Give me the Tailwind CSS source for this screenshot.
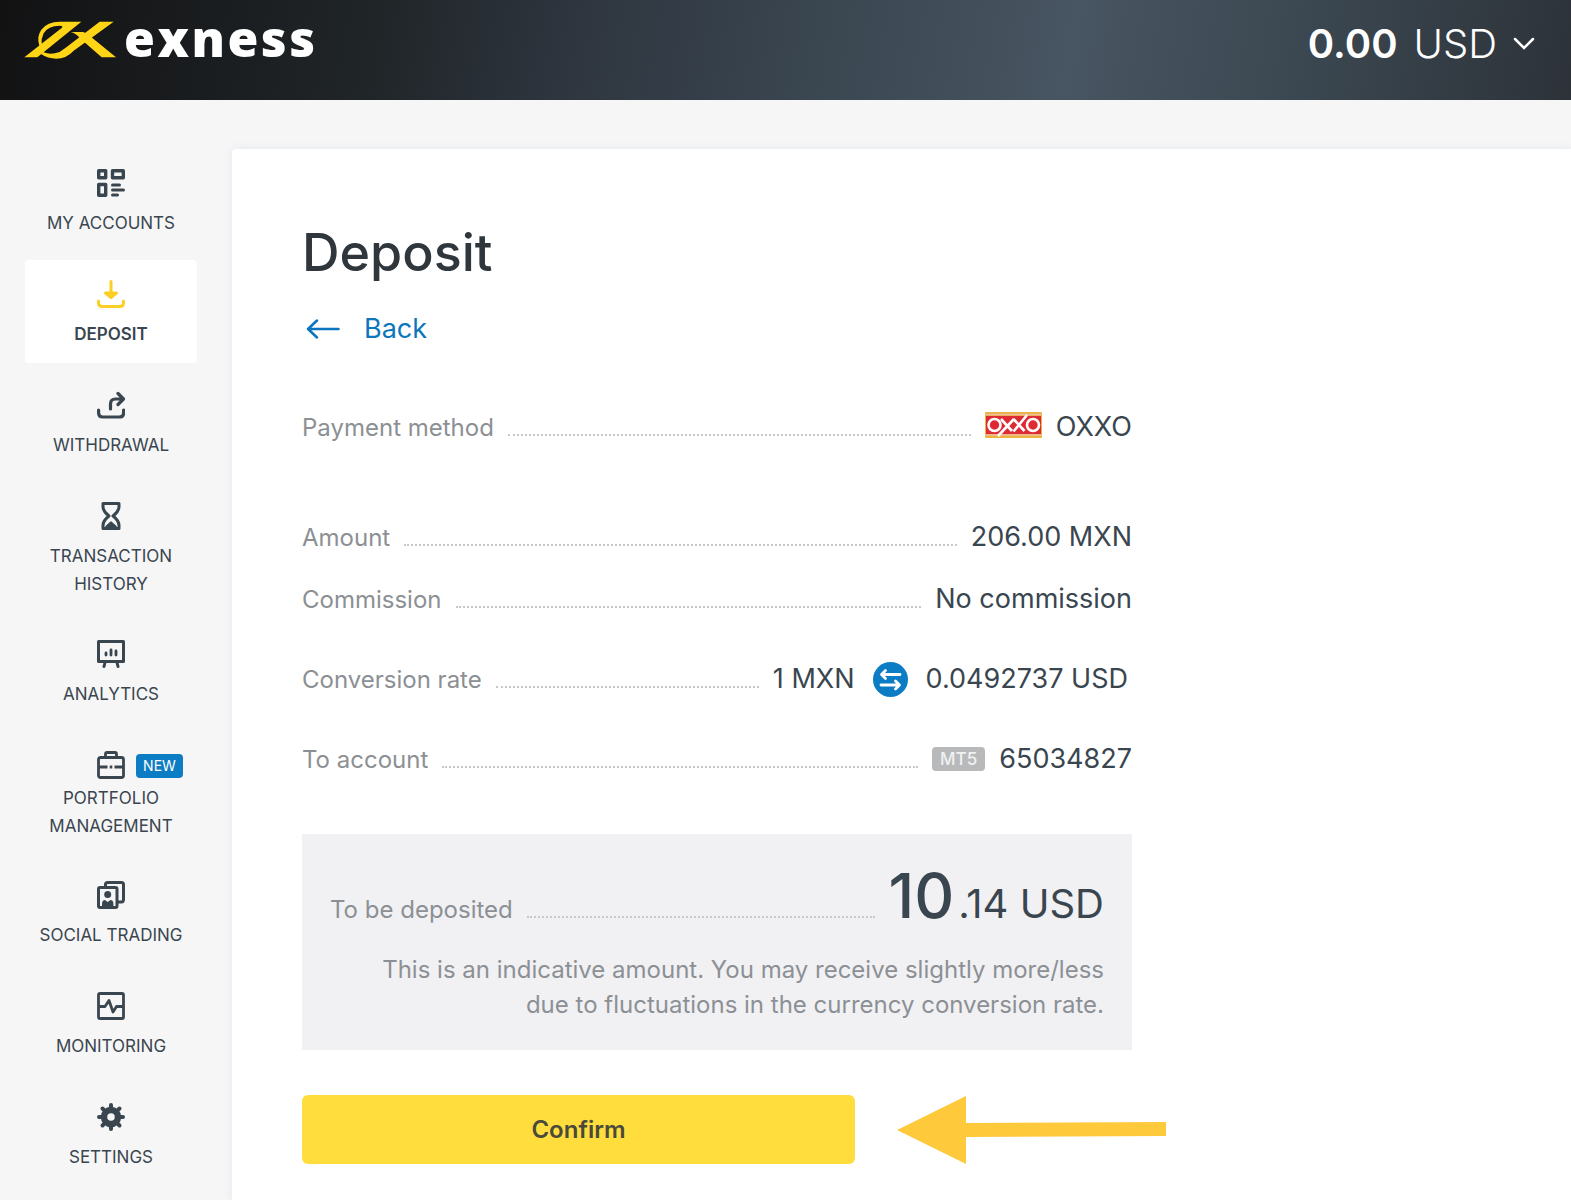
<!DOCTYPE html>
<html lang="en">

<head>
    <meta charset="UTF-8">
    <meta name="viewport" content="width=device-width, initial-scale=1.0">
    <title>Exness - Deposit</title>
    <script src="https://cdn.jsdelivr.net/npm/@tailwindcss/browser@4"></script>
</head>

<body class="min-h-screen flex flex-col bg-[#f6f6f7] font-['Inter',sans-serif] text-[#3a464f]">
    <!-- Header -->
    <header class="h-25 shrink-0 flex items-center justify-between pl-6 pr-9 bg-[linear-gradient(100deg,#121213_0%,#202528_24%,#2f3640_37%,#3a4650_52%,#485562_68%,#3a464f_84%,#2d3239_100%)] text-white">
        <a href="#" class="flex items-center gap-[6px] pb-5">
            <svg class="w-[94px] h-10" viewBox="75 58 282 120" fill="#ffd516" aria-hidden="true">
                <path d="M247 63 L115 170 L76 170 L188 82 Q194 75 182 75 Q147 75 134 98 Q126 114 128 130 L121 135 Q112 108 127 87 Q145 63 182 63 Z" />
                <path d="M344 63 L224 150 Q202 174 172 174 Q146 174 126 160 L132 154 Q150 162 168 158 Q184 155 200 141 L302 63 Z" />
                <path d="M215 94 L252 94 Q262 96 270 104 L351 170 L308 170 L242 112 Q231 98 215 94 Z" />
            </svg>
            <span class="pb-1 font-['Open_Sans',sans-serif] font-extrabold text-[50px] leading-10 tracking-wider">exness</span>
        </a>
        <button type="button" class="flex items-center gap-4 pb-3 text-[40px] leading-12">
            <span class="flex gap-4"><b class="font-semibold">0.00</b> <span class="font-light">USD</span></span>
            <svg class="w-[22px] h-[14px]" viewBox="0 0 22 14" fill="none" stroke="white" stroke-width="2.5" stroke-linecap="round" aria-hidden="true">
                <path d="M2 2l9 9 9-9" />
            </svg>
        </button>
    </header>

    <div class="flex flex-1 pt-[49px]">
        <!-- Sidebar -->
        <nav class="w-[232px] shrink-0 pl-[25px] pr-[35px] flex flex-col gap-2 text-center text-[17px] leading-7 uppercase">
            <a href="#" class="flex flex-col items-center pt-5 pb-[15px]">
                <svg class="size-7 mb-3" viewBox="0 0 28 28" fill="none" stroke="currentColor" stroke-width="3.4">
                    <path d="M1.700 1.700h7v7h-7zM15.500 1.700h10.800v7h-10.800zM1.700 15.500h7v10.800h-7z" stroke-linejoin="round" />
                    <path d="M15.500 16h7M15.500 21h11M15.500 26h5" stroke-width="3" stroke-linecap="round" />
                </svg>
                My accounts
            </a>
            <a href="#" class="flex flex-col items-center pt-5 pb-[15px] bg-white rounded-sm font-semibold">
                <svg class="size-7 mb-3" viewBox="0 0 28 28" fill="none" stroke="#fccf25" stroke-width="3" stroke-linecap="round" stroke-linejoin="round">
                    <path d="M1.500 21v1.500q0 4 4 4h17q4 0 4-4v-1.500" />
                    <path d="M14 1.500v14M8.500 13l5.500 4.500 5.500-4.500z" fill="#fccf25" />
                </svg>
                Deposit
            </a>
            <a href="#" class="flex flex-col items-center pt-5 pb-[15px]">
                <svg class="size-7 mb-3" viewBox="0 0 28 28" fill="none" stroke="currentColor" stroke-width="3.2" stroke-linecap="round" stroke-linejoin="round">
                    <path d="M1.600 19v3q0 4 4 4h17q4 0 4-4v-3" />
                    <path d="M13.500 18v-5q0-5 5-5h7M21 2.500l5.500 5.500-5.500 5.500" />
                </svg>
                Withdrawal
            </a>
            <a href="#" class="flex flex-col items-center pt-5 pb-[14px]">
                <svg class="size-7 mb-3" viewBox="0 0 28 28" fill="none" stroke="currentColor" stroke-width="3" stroke-linecap="round" stroke-linejoin="round">
                    <path d="M6 1.500h16v3q0 5-6 9.500 6 4.500 6 9.500v3H6v-3q0-5 6-9.500-6-4.500-6-9.500z" />
                    <path d="M9 24.500l5-4.500 5 4.500z" fill="currentColor" stroke-width="1.500" />
                </svg>
                Transaction<br>history
            </a>
            <a href="#" class="flex flex-col items-center pt-5 pb-[15px]">
                <svg class="size-7 mb-3" viewBox="0 0 28 28" fill="none" stroke="currentColor" stroke-width="3" stroke-linecap="round" stroke-linejoin="round">
                    <path d="M1.500 1.500h25v20h-25zM8 22.500l-1 4M20 22.500l1 4" />
                    <path d="M9 13v2M14 10v5M19 11v4" stroke-width="2.800" />
                </svg>
                Analytics
            </a>
            <a href="#" class="relative flex flex-col items-center pt-5 pb-[13px]">
                <svg class="size-7 mb-[5px]" viewBox="0 0 28 28" fill="none" stroke="currentColor" stroke-width="2.800" stroke-linejoin="round">
                    <rect x="1.500" y="6.500" width="25" height="20" rx="2" />
                    <path d="M8.500 6v-3q0-1.500 1.500-1.500h8q1.500 0 1.500 1.500v3" />
                    <path d="M2 16h8.500M12.700 16h2.600M17.500 16h8.500" />
                </svg>
                <span class="absolute left-[111px] top-[23px] w-[47px] h-6 rounded-sm bg-[#0c7cc4] text-white text-sm leading-6">New</span>
                Portfolio<br>management
            </a>
            <a href="#" class="flex flex-col items-center pt-5 pb-[15px]">
                <svg class="size-7 mb-3" viewBox="0 0 28 28" fill="none" stroke="currentColor" stroke-width="3" stroke-linejoin="round">
                    <path d="M8.500 6v-2.500q0-2 2-2h14q2 0 2 2v14.500q0 3-2 3h-3.500" />
                    <rect x="1.500" y="6.500" width="18.500" height="20" rx="1.500" />
                    <circle cx="10.700" cy="13.500" r="3.500" fill="currentColor" stroke="none" />
                    <path d="M5 26v-3q0-4 3-4l2.700 2 2.700-2q3 0 3 4v3z" fill="currentColor" stroke="none" />
                </svg>
                Social trading
            </a>
            <a href="#" class="flex flex-col items-center pt-5 pb-[15px]">
                <svg class="size-7 mb-3" viewBox="0 0 28 28" fill="none" stroke="currentColor" stroke-width="2.800" stroke-linejoin="round">
                    <rect x="1.500" y="1.500" width="25" height="25" rx="1.500" />
                    <path d="M2 14.500h6l4-6 4 11.500 3.500-5.500h6.500" />
                </svg>
                Monitoring
            </a>
            <a href="#" class="flex flex-col items-center pt-5 pb-[15px]">
                <svg class="size-7 mb-3" viewBox="0 0 28 28" fill="none" stroke="currentColor">
                    <circle cx="14" cy="14" r="7" stroke-width="6.500" />
                    <path d="M14 5V2M14 23v3M5 14H2M23 14h3M7.600 7.600L5.500 5.500M20.400 7.600l2.100-2.100M7.600 20.400l-2.100 2.100M20.400 20.400l2.100 2.100" stroke-width="4" stroke-linecap="round" />
                </svg>
                Settings
            </a>
        </nav>

        <!-- Deposit summary -->
        <main class="flex-1 bg-white rounded-tl-sm shadow-[0_0_8px_#e3e6ec] pl-[70px] pr-6 pt-[72px]">
            <div class="max-w-[830px]">
                <h1 class="text-[52px] leading-16 font-medium text-[#30373c]">Deposit</h1>
                <a href="#" class="mt-7 ml-1 flex items-center gap-6 text-[27px] leading-8 text-[#0b76bd]">
                    <svg class="w-[34px] h-5" viewBox="0 0 34 20" fill="none" stroke="currentColor" stroke-width="2.500" stroke-linecap="round" stroke-linejoin="round" aria-hidden="true">
                        <path d="M32.500 10H2M11 1.500L2 10l9 8.500" />
                    </svg>
                    Back
                </a>

                <dl class="mt-[66px] leading-8 text-[27px]">
                    <div class="h-8 flex items-baseline gap-[14px]">
                        <dt class="text-2xl leading-8 text-[#8c9094]">Payment method</dt>
                        <dd class="flex-1 border-b-2 border-dotted border-[#c6c8ca]"></dd>
                        <dd class="flex items-baseline gap-[14px]">
                            <svg class="self-center w-[57px] h-[26px] mb-1" viewBox="0 0 57 26" fill="none" aria-hidden="true">
                                <rect width="57" height="26" rx="1" fill="#e9b53f" />
                                <path d="M0 2.500h57M0 23h57" stroke="#f0b9a0" stroke-width="1.500" />
                                <rect x="1" y="4" width="55" height="18" fill="#de2a33" />
                                <g stroke="#fff" stroke-width="2.600">
                                    <circle cx="9.500" cy="13" r="6" />
                                    <circle cx="48" cy="13" r="6" />
                                    <path d="M16 7l11 12M42 3L28.500 19.500M28.500 7l11 12M29 7L13 24" />
                                </g>
                            </svg>
                            OXXO
                        </dd>
                    </div>
                    <div class="mt-[78px] h-8 flex items-baseline gap-[14px]">
                        <dt class="text-2xl leading-8 text-[#8c9094]">Amount</dt>
                        <dd class="flex-1 border-b-2 border-dotted border-[#c6c8ca]"></dd>
                        <dd>206.00 MXN</dd>
                    </div>
                    <div class="mt-[30px] h-8 flex items-baseline gap-[14px]">
                        <dt class="text-2xl leading-8 text-[#8c9094]">Commission</dt>
                        <dd class="flex-1 border-b-2 border-dotted border-[#c6c8ca]"></dd>
                        <dd>No commission</dd>
                    </div>
                    <div class="mt-12 h-8 flex items-baseline gap-[14px]">
                        <dt class="text-2xl leading-8 text-[#8c9094]">Conversion rate</dt>
                        <dd class="flex-1 border-b-2 border-dotted border-[#c6c8ca]"></dd>
                        <dd class="h-8 flex items-center gap-[18px] pr-1">
                            1 MXN
                            <svg class="size-[35px]" viewBox="0 0 35 35" fill="none" stroke="#fff" stroke-width="2.800" stroke-linejoin="round" stroke-linecap="round" aria-hidden="true">
                                <circle cx="17.500" cy="17.500" r="17.500" fill="#0c7cc4" stroke="none" />
                                <path d="M27 12.500H9M12.500 8.500l-4 4 4 4M8 23h18M22.500 19l4 4-4 4" />
                            </svg>
                            0.0492737 USD
                        </dd>
                    </div>
                    <div class="mt-12 h-8 flex items-baseline gap-[14px]">
                        <dt class="text-2xl leading-8 text-[#8c9094]">To account</dt>
                        <dd class="flex-1 border-b-2 border-dotted border-[#c6c8ca]"></dd>
                        <dd class="flex items-baseline gap-[14px]">
                            <span class="self-center h-6 px-2 rounded-sm bg-[#b7b9bb] text-white/80 text-[17px] leading-6 font-medium">MT5</span>
                            65034827
                        </dd>
                    </div>
                </dl>

                <section class="mt-[59px] px-7 pt-[30px] pb-7 bg-[#f1f1f4]">
                    <div class="h-16 flex items-baseline gap-[14px]">
                        <span class="text-2xl leading-8 text-[#8c9094]">To be deposited</span>
                        <span class="flex-1 border-b-2 border-dotted border-[#c6c8ca]"></span>
                        <span class="text-[40px] leading-16"><span class="mr-1 text-[62px] font-medium">10</span>.14 USD</span>
                    </div>
                    <p class="mt-6 text-right text-2xl leading-[35px] text-[#8c9094]">
                        This is an indicative amount. You may receive slightly more/less<br>
                        due to fluctuations in the currency conversion rate.
                    </p>
                </section>
            </div>

            <div class="mt-[45px] flex items-center gap-[42px]">
                <button type="button" class="w-[553px] h-[69px] rounded-md bg-[#ffdd3c] text-2xl font-semibold text-[#4a4a3c]">Confirm</button>
                <svg class="w-[269px] h-[68px]" viewBox="0 0 269 68" fill="#ffc93c" aria-hidden="true">
                    <path d="M0 34L69 0v27l200-1v14l-200 1v27z" />
                </svg>
            </div>
        </main>
    </div>
</body>

</html>
